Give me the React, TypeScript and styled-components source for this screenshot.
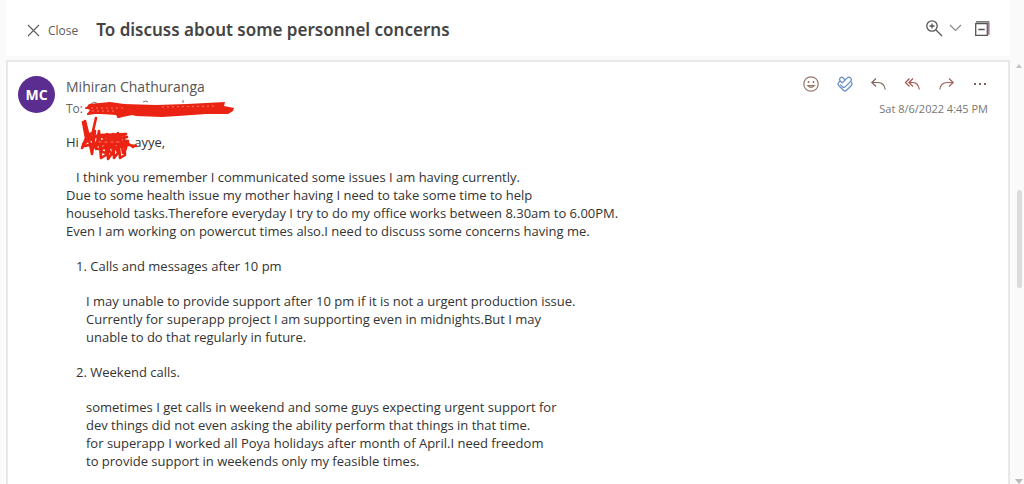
import React from 'react';
import styled, { createGlobalStyle } from 'styled-components';

const Global = createGlobalStyle`
  * { box-sizing: border-box; }
  body { margin: 0; background: #fafafa; color: #333; font-family: "Open Sans", "Noto Sans", sans-serif; }
  button { font: inherit; color: inherit; background: none; border: 0; padding: 0; cursor: pointer; }
  svg { display: block; fill: none; stroke: currentColor; overflow: visible; }
`;
const Page = styled.div`
  display: grid;
  grid-template-columns: minmax(0, 1fr) 14px;
  grid-template-rows: 60px minmax(0, 1fr);
  height: 100vh;
  padding-left: 6px;
  overflow: hidden;
`;
const TopBar = styled.header`
  grid-column: 1;
  display: flex;
  align-items: center;
  background: #fff;
  padding: 0 12px 0 22px;
  margin-bottom: 4px;
`;
const CloseButton = styled.button`
  display: flex;
  align-items: center;
  gap: 9px;
  padding-top: 4px;
  font-size: 12px;
  color: #5c5c5c;
`;
const Subject = styled.h1`
  margin: 0 0 0 18px;
  padding-top: 4px;
  flex: 1;
  font-family: "Noto Sans", "Open Sans", sans-serif;
  font-size: 17px;
  line-height: 24px;
  font-weight: 600;
  color: #444;
`;
const TopTools = styled.div`
  display: flex;
  align-items: center;
`;
const IconButton = styled.button<{ $tone?: string; $width: number }>`
  display: flex;
  align-items: center;
  justify-content: center;
  width: ${(p) => p.$width}px;
  height: 20px;
  color: ${(p) => p.$tone || '#555'};
`;
const Card = styled.main`
  grid-column: 1;
  background: #fff;
  border: 2px solid #e8e8e8;
  border-bottom: 0;
  display: grid;
  grid-template-columns: 38px minmax(0, 1fr);
  column-gap: 10px;
  align-content: start;
  padding: 12px 20px 0 10px;
  overflow: hidden;
`;
const Avatar = styled.div`
  width: 37px;
  height: 37px;
  margin-top: 2px;
  border-radius: 50%;
  background: #5b2d91;
  color: #fff;
  display: flex;
  align-items: center;
  justify-content: center;
  font-size: 14px;
  font-weight: 700;
`;
const MessageHead = styled.div`
  display: flex;
  justify-content: space-between;
  height: 59px;
`;
const SenderBlock = styled.div`
  padding-top: 1px;
`;
const Sender = styled.div`
  font-size: 14px;
  line-height: 24px;
  color: #555;
`;
const Recipient = styled.div`
  position: relative;
  font-size: 12px;
  line-height: 20px;
  color: #666;
`;
const HeadRight = styled.div`
  display: flex;
  flex-direction: column;
  align-items: flex-end;
`;
const Actions = styled.div`
  display: flex;
  margin-right: -9px;
`;
const Stamp = styled.time`
  font-size: 11px;
  line-height: 20px;
  margin-top: 5px;
  color: #777;
`;
const Body = styled.article`
  grid-column: 2;
  font-size: 13px;
  line-height: 18px;
  color: #333;
`;
const Para = styled.p<{ $inset?: number }>`
  margin: 0 0 17px;
  padding-left: ${(p) => p.$inset || 0}px;
`;
const Lead = styled.span`
  padding-left: 10px;
`;
const Name = styled.span`
  display: inline-block;
  position: relative;
  width: 52px;
`;
const RecipientMark = styled.svg`
  position: absolute;
  left: 20px;
  top: -3px;
  color: #ea2312;
`;
const NameMark = styled.svg`
  position: absolute;
  left: 0;
  top: -30px;
  color: #ea2312;
`;
const Rail = styled.aside`
  grid-column: 2;
  display: flex;
  flex-direction: column;
  align-items: center;
  justify-content: space-between;
  padding: 4px 0 0 4px;
`;
const Track = styled.div`
  flex: 1;
  padding-top: 122px;
`;
const Thumb = styled.div`
  width: 5px;
  height: 98px;
  border-radius: 3px;
  background: #dcdcdc;
`;

export default function App() {
  return (
    <>
      <Global />
      <Page>
        <TopBar>
          <CloseButton>
            <svg width="11" height="11" strokeWidth="1.1"><path d="M0 0l11 11M11 0L0 11" /></svg>
            Close
          </CloseButton>
          <Subject>To discuss about some personnel concerns</Subject>
          <TopTools>
            <IconButton $width={20} aria-label="Zoom">
              <svg width="16" height="16" strokeWidth="1.3"><circle cx="6" cy="6" r="5.2" /><path d="M10 10l6 6M6 3.5v5M3.5 6h5" /></svg>
            </IconButton>
            <IconButton $width={22} $tone="#8a8a8a" aria-label="Zoom options">
              <svg width="11" height="6" strokeWidth="1.2"><path d="M0 0l5.5 5.5L11 0" /></svg>
            </IconButton>
            <IconButton $width={32} aria-label="Collapse">
              <svg width="15" height="15" strokeWidth="1.3">
                <path d="M.7 2.7h11.6v11.6H.7zM3.3 8.5h6.4" />
                <path d="M1 .9h13" />
                <path d="M13.7 .5V13.8" stroke="#9b7f98" strokeWidth="1.8" />
              </svg>
            </IconButton>
          </TopTools>
        </TopBar>
        <Card>
          <Avatar>MC</Avatar>
          <MessageHead>
            <SenderBlock>
              <Sender>Mihiran Chathuranga</Sender>
              <Recipient>
                To:
                <RecipientMark width="150" height="26">
                  <path d="M5 8q2-3 6-1" stroke="#777" />
                  <path d="M57 6q3-2 5 0M97 4v3" stroke="#777" />
                  <path fill="currentColor" stroke="none" d="M3 8L24 6 38 8 70 9 101 8 139 6 138 10 148 12 147 15 142 18 120 18 92 20 76 21 50 20 46 19 32 22 30 19 15 18 1 18 4 14 0 12z" />
                  <path d="M0 12l34 1 40-2 66 1M2 18l38-6M32 21l20-7" strokeWidth="2" strokeLinecap="round" />
                  <path d="M5 12h32M76 11l54-1M6 15h25" stroke="#f77c70" strokeWidth="1" strokeDasharray="2 3" />
                </RecipientMark>
              </Recipient>
            </SenderBlock>
            <HeadRight>
              <Actions>
                <IconButton $width={34} $tone="#98766e" aria-label="React">
                  <svg width="16" height="16" strokeWidth="1.2"><circle cx="8" cy="8" r="7.2" /><path d="M4.8 9.6q3.2 3.6 6.4 0z" /><path d="M5.5 5v2M10.5 5v2" strokeWidth="1.5" /></svg>
                </IconButton>
                <IconButton $width={34} $tone="#648dc5" aria-label="Loop components">
                  <svg width="16" height="16" strokeWidth="1.2" strokeLinejoin="round">
                    <path d="M8 4L6.3 1.9Q4.8 .5 3.3 1.9 1.8 3.3 3.2 4.9L5.2 7" />
                    <path d="M5.2 7L10.3 1.9Q12 .5 13.6 2.1 15.2 3.8 13.6 5.4L8.2 10.8Q6.8 12 5.4 10.7L3.3 8.6" />
                    <path d="M3.2 4.9L1.6 6.5Q.2 8 1.6 9.5L6.5 14.3Q8 15.7 9.5 14.3L14.4 9.5Q15.8 8 14.2 6.2L13.6 5.4" />
                  </svg>
                </IconButton>
                <IconButton $width={33} $tone="#80625d" aria-label="Reply">
                  <svg width="15" height="12" strokeWidth="1.2"><path d="M5 .5L.8 4.5 5 8.5M1 4.5h6q6 0 7.3 7" /></svg>
                </IconButton>
                <IconButton $width={34} $tone="#a2544f" aria-label="Reply all">
                  <svg width="15" height="12" strokeWidth="1.2"><path d="M4.5.5L.5 4.5l4 4M8 .5L4 4.5l4 4M4 4.5h4q5 0 6.3 7" /></svg>
                </IconButton>
                <IconButton $width={34} $tone="#a2605a" aria-label="Forward">
                  <svg width="15" height="12" strokeWidth="1.2"><path d="M10 .5l4.2 4-4.2 4M14 4.5H8q-6 0-7.3 7" /></svg>
                </IconButton>
                <IconButton $width={34} $tone="#80625d" aria-label="More actions">
                  <svg width="12" height="2" strokeWidth="2"><path d="M0 1h2M5 1h2M10 1h2" /></svg>
                </IconButton>
              </Actions>
              <Stamp>Sat 8/6/2022 4:45 PM</Stamp>
            </HeadRight>
          </MessageHead>
          <Body>
            <Para>
              Hi <Name>
                <NameMark width="58" height="44" strokeWidth="2.6" strokeLinecap="round" strokeLinejoin="round">
                  <path d="M14 1L11 14 12 24M1 5L4 21 0 31 7 20 3 4 10 37 13 14 8 17 14 32 17 14 19 41 24 38 25 17 26 42 31 35 31 17 32 41 36 36 36 16 38 41 43 38 42 18 43 34 46 24" />
                  <path d="M1 27L16 18 44 17 3 29 45 20 10 29 45 24 16 32 44 29M14 20L32 20 42 21" />
                  <path d="M17 20L20 35 25 36 22 22 28 35 32 38 29 24 36 35 39 22 41 36M38 27L54 29M44 25L51 30" />
                  <path d="M17 25h24" stroke="#f77c70" strokeWidth="1" strokeDasharray="2 4" />
                </NameMark>
              </Name>ayye,
            </Para>
            <Para>
              <Lead>I think you remember I communicated some issues I am having currently.</Lead><br />
              Due to some health issue my mother having I need to take some time to help<br />
              household tasks.Therefore everyday I try to do my office works between 8.30am to 6.00PM.<br />
              Even I am working on powercut times also.I need to discuss some concerns having me.
            </Para>
            <Para $inset={10}>1. Calls and messages after 10 pm</Para>
            <Para $inset={20}>
              I may unable to provide support after 10 pm if it is not a urgent production issue.<br />
              Currently for superapp project I am supporting even in midnights.But I may<br />
              unable to do that regularly in future.
            </Para>
            <Para $inset={10}>2. Weekend calls.</Para>
            <Para $inset={20}>
              sometimes I get calls in weekend and some guys expecting urgent support for<br />
              dev things did not even asking the ability perform that things in that time.<br />
              for superapp I worked all Poya holidays after month of April.I need freedom<br />
              to provide support in weekends only my feasible times.
            </Para>
          </Body>
        </Card>
        <Rail>
          <svg width="6" height="4"><path d="M0 4l3-4 3 4z" fill="#c4c4c4" stroke="none" /></svg>
          <Track><Thumb /></Track>
          <svg width="8" height="5"><path d="M0 0h8L4 5z" fill="#bbb" stroke="none" /></svg>
        </Rail>
      </Page>
    </>
  );
}
